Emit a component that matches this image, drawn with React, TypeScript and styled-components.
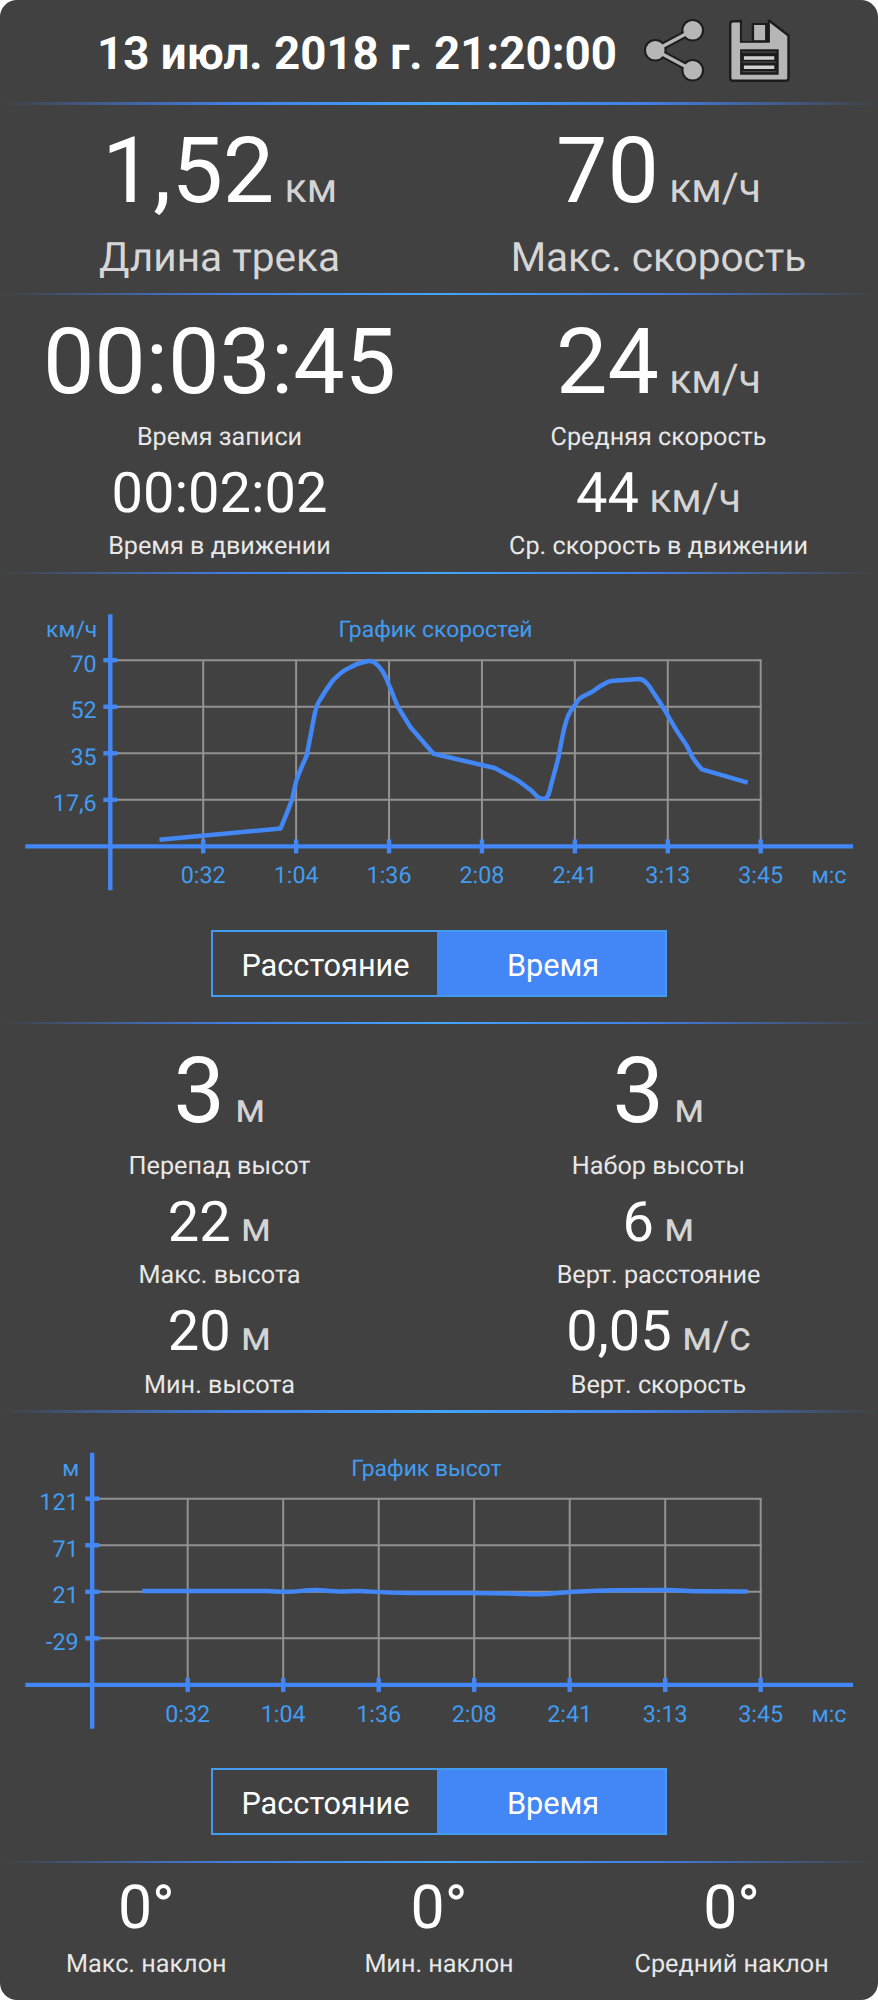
import React from "react";
import styled, { createGlobalStyle } from "styled-components";

const GlobalStyle = createGlobalStyle`
  body {
    margin: 0;
    background: #ffffff;
    font-family: Roboto, "Open Sans", sans-serif;
    text-rendering: geometricPrecision;
  }
`;

const BLUE = "#4287f5";
const SKY = "#429cf2";

const Screen = styled.main`
  box-sizing: border-box;
  width: 878px;
  height: 2000px;
  display: flex;
  flex-direction: column;
  background: #414141;
  border-radius: 17px;
  overflow: hidden;
  color: #ffffff;
`;

const Header = styled.header`
  box-sizing: border-box;
  height: 102px;
  flex: none;
  display: flex;
  align-items: center;
  padding: 0 0 0 97px;
`;

const Title = styled.h1`
  margin: 7px 17px 0 0;
  width: 523px;
  font-size: 45.7px;
  line-height: 54px;
  font-weight: 700;
  white-space: nowrap;
`;

const IconButton = styled.button`
  width: 82px;
  height: 82px;
  padding: 0;
  border: 0;
  background: none;
  display: block;
`;

const Divider = styled.hr<{ $thickness?: number }>`
  flex: none;
  width: 100%;
  height: ${(p) => p.$thickness ?? 2}px;
  margin: 0;
  border: 0;
  background: linear-gradient(
    90deg,
    rgba(66, 120, 220, 0) 0%,
    rgba(66, 122, 225, 0.5) 12%,
    #4280e8 27%,
    #42a5f8 50%,
    #4280e8 73%,
    rgba(66, 122, 225, 0.5) 88%,
    rgba(66, 120, 220, 0) 100%
  );
`;

const StatSection = styled.section<{ $height: number; $columns?: number; $top: number }>`
  box-sizing: border-box;
  flex: none;
  height: ${(p) => p.$height}px;
  padding-top: ${(p) => p.$top}px;
  display: grid;
  grid-template-columns: repeat(${(p) => p.$columns ?? 2}, 1fr);
`;

const Column = styled.div`
  display: flex;
  flex-direction: column;
  gap: 7px;
`;

type Size = "hero" | "large" | "medium" | "angle";

const metrics: Record<Size, { font: number; line: number; gap: number }> = {
  hero: { font: 91.6, line: 108, gap: 7 },
  large: { font: 91.6, line: 108, gap: 6 },
  medium: { font: 56, line: 66, gap: 6.4 },
  angle: { font: 60.8, line: 72, gap: 6 },
};

const StatBox = styled.div<{ $size: Size }>`
  display: flex;
  flex-direction: column;
  align-items: center;
  gap: ${(p) => metrics[p.$size].gap}px;
`;

const Value = styled.div<{ $size: Size }>`
  height: ${(p) => metrics[p.$size].line}px;
  font-size: ${(p) => metrics[p.$size].font}px;
  line-height: ${(p) => metrics[p.$size].line}px;
  white-space: pre;
`;

const Unit = styled.span`
  font-size: 41px;
  line-height: 1;
  color: #d4d4d4;
`;

const Caption = styled.div<{ $hero: boolean }>`
  font-size: ${(p) => (p.$hero ? 40.6 : 25.2)}px;
  line-height: ${(p) => (p.$hero ? 48 : 30)}px;
  color: ${(p) => (p.$hero ? "#d6d6d6" : "#e8e8e8")};
  white-space: nowrap;
`;

interface StatProps {
  size: Size;
  value: string;
  unit?: string;
  label: string;
}

function Stat({ size, value, unit, label }: StatProps) {
  return (
    <StatBox $size={size}>
      <Value $size={size}>
        {value}
        {unit && <Unit>{" " + unit}</Unit>}
      </Value>
      <Caption $hero={size === "hero"}>{label}</Caption>
    </StatBox>
  );
}

const ChartSection = styled.section`
  box-sizing: border-box;
  flex: none;
  height: 448px;
  padding-top: 30px;
  display: flex;
  flex-direction: column;
  align-items: center;
`;

const ChartSvg = styled.svg`
  display: block;
  width: 878px;
  height: 300px;
  flex: none;

  text {
    fill: ${SKY};
    font-size: 23.3px;
  }
`;

const ChartCaption = styled.text`
  && {
    font-size: 22.9px;
  }
`;

const Toggle = styled.div<{ $gap: number }>`
  box-sizing: border-box;
  width: 456px;
  height: 67px;
  flex: none;
  margin-top: ${(p) => p.$gap}px;
  display: flex;
  border: 2px solid ${SKY};
`;

const ToggleOption = styled.button<{ $active?: boolean }>`
  flex: ${(p) => (p.$active ? "1" : "none")};
  width: 224px;
  padding: ${(p) => (p.$active ? "4px 0 0 4px" : "4px 0 0 1px")};
  border: 0;
  background: ${(p) => (p.$active ? BLUE : "transparent")};
  color: #ffffff;
  font-family: inherit;
  font-size: 30.7px;
  line-height: 36px;
`;

const TIMES = ["0:32", "1:04", "1:36", "2:08", "2:41", "3:13", "3:45"];

interface ChartProps {
  title: string;
  unit: string;
  ticks: string[];
  axisX: number;
  gridTop: number;
  path: string;
}

function Chart({ title, unit, ticks, axisX, gridTop, path }: ChartProps) {
  const right = 760.7;
  const axisY = gridTop + 186.2;
  const xs = TIMES.map((_, i) => axisX + ((right - axisX) * (i + 1)) / TIMES.length);
  const ys = ticks.map((_, i) => gridTop + i * 46.55);
  return (
    <ChartSvg viewBox="0 0 878 300">
      <g stroke="#929292" strokeWidth="2">
        {ys.map((y) => (
          <line key={y} x1={axisX} x2={right + 1} y1={y} y2={y} />
        ))}
        {xs.map((x) => (
          <line key={x} x1={x} x2={x} y1={gridTop} y2={axisY} />
        ))}
      </g>
      <g stroke={BLUE} strokeWidth="4.4">
        <line x1={axisX} x2={axisX} y1={gridTop - 46} y2={gridTop + 230} />
        <line x1="25.3" x2="853" y1={axisY} y2={axisY} />
        {ys.map((y) => (
          <line key={y} x1={axisX - 7} x2={axisX + 7} y1={y} y2={y} />
        ))}
        {xs.map((x) => (
          <line key={x} x1={x} x2={x} y1={axisY - 7} y2={axisY + 7} />
        ))}
      </g>
      <path d={path} fill="none" stroke={BLUE} strokeWidth="4.5" strokeLinejoin="round" />
      <g textAnchor="end">
        <ChartCaption x={axisX - 13} y={gridTop - 22.8}>{unit}</ChartCaption>
        {ticks.map((t, i) => (
          <text key={t} x={axisX - 13.6} y={ys[i] + 11.6}>{t}</text>
        ))}
      </g>
      <g textAnchor="middle">
        <ChartCaption x={(axisX + right) / 2} y={gridTop - 22.8}>{title}</ChartCaption>
        {TIMES.map((t, i) => (
          <text key={t} x={xs[i]} y={gridTop + 223}>{t}</text>
        ))}
        <text x="829" y={gridTop + 223}>м:с</text>
      </g>
    </ChartSvg>
  );
}

const SPEED_PATH =
  "M159.5 235.7 L280.5 224.6 C285 214 289 204 292 195.5 C294 189 294.5 181 297.5 173.5 C301 164 304 157.5 306.7 151.5 L314.7 110 C316.2 103 317.5 99 320.5 95 C325 87.5 329 81.5 333.3 76 C339 70 344 66 350 63.5 C356 60 362 58.3 367 57.3 C370 56.9 371.5 57 373.5 57.8 C377 60 380.5 64 383 68 C386 73 387.5 77 389 81 L398 103 L410.7 123.5 L433.3 149.5 L440 151.2 L494.7 164 L518 176.5 L531.3 186.5 L537.5 192.8 C540 194.8 544.5 195.3 546.5 193.8 C548 192 549 190 549.5 187.5 C552 177 555 167 557.7 156.5 C561 142 563 124 568 112 C570 107.5 572 104.5 575 101 C577 98 578 95.5 581 93.5 L592.7 87.5 C596 85 598 83.5 601 81.8 C605 79.5 608 77.5 611 77 L625 76.1 L639 75 C642 75 644.5 76.5 647 79.5 C649.5 82 651 85 653 88 C659 97 662 101 667 110 C672 119 676 126 681 133 C684 137.5 686 140 688 144 C689.5 147 690.5 150 693 154 C696 158 698 161.5 702 165.3 L747.7 178.7";

const ALTITUDE_PATH =
  "M142.3 148 L267 148 C275 148.2 279 148.8 286 148.8 C297 148.8 305 147 315 147 C325 147 330 148.5 340 148.5 C350 148.5 356 147.7 364 148.2 C378 149 388 149.9 410 149.9 L474 150 C505 150 520 151.2 538 151.3 C552 151.2 558 149.6 570 149 C585 148.2 599 147.4 615 147.3 L668 147.1 C680 147.3 690 148.2 702 148.3 L747.7 148.5";

function ShareIcon() {
  const parts = (
    <>
      <path d="M55.7 20.3 L18.3 40.3 L55.7 60.3" fill="none" />
      <circle cx="55.7" cy="20.3" r="7.6" />
      <circle cx="18.3" cy="40.3" r="7.6" />
      <circle cx="55.7" cy="60.3" r="7.6" />
    </>
  );
  return (
    <svg width="82" height="82" viewBox="0 0 82 82" aria-label="Поделиться">
      <g fill="#1c1c1c" stroke="#1c1c1c" strokeWidth="7.4">{parts}</g>
      <g fill="#b6b6b6" stroke="#b6b6b6" strokeWidth="3.4">{parts}</g>
    </svg>
  );
}

function SaveIcon() {
  return (
    <svg width="82" height="82" viewBox="0 0 82 82" aria-label="Сохранить">
      <g transform="translate(1.5 0)">
        <path
          d="M13 11.3 H49.5 L68 25.5 V68 Q68 70.8 65.4 70.8 H12.4 Q9.7 70.8 9.7 68 V14 Q9.7 11.3 12.4 11.3 Z"
          fill="#b6b6b6"
          stroke="#1c1c1c"
          strokeWidth="2.4"
          strokeLinejoin="round"
        />
        <path d="M19.4 9.6 H49.4 V32.8 H19.4 Z" fill="#1c1c1c" />
        <path d="M21.4 9 H47.2 V13 H31.2 V31 H21.4 Z" fill="#414141" />
        <path d="M33.6 15 H44.6 V30.2 H33.6 Z" fill="#b6b6b6" />
        <path d="M19.6 39.3 H58.2 V64.8 H19.6 Z" fill="#1c1c1c" />
        <path d="M21.4 42.2 H56 M21.4 52.2 H56 M21.4 61.7 H56" stroke="#4a4a4a" strokeWidth="1.3" />
        <path d="M23.4 48 H53.8 M23.4 57.2 H53.8" stroke="#d0d0d0" strokeWidth="3.6" />
      </g>
    </svg>
  );
}

export default function App() {
  return (
    <>
      <GlobalStyle />
      <Screen>
        <Header>
          <Title>13 июл. 2018 г. 21:20:00</Title>
          <IconButton>
            <ShareIcon />
          </IconButton>
          <IconButton>
            <SaveIcon />
          </IconButton>
        </Header>
        <Divider $thickness={3} />

        <StatSection $height={188} $top={13}>
          <Stat size="hero" value="1,52" unit="км" label="Длина трека" />
          <Stat size="hero" value="70" unit="км/ч" label="Макс. скорость" />
        </StatSection>
        <Divider />

        <StatSection $height={277} $top={14}>
          <Column>
            <Stat size="large" value="00:03:45" label="Время записи" />
            <Stat size="medium" value="00:02:02" label="Время в движении" />
          </Column>
          <Column>
            <Stat size="large" value="24" unit="км/ч" label="Средняя скорость" />
            <Stat size="medium" value="44" unit="км/ч" label="Ср. скорость в движении" />
          </Column>
        </StatSection>
        <Divider />

        <ChartSection>
          <Chart
            title="График скоростей"
            unit="км/ч"
            ticks={["70", "52", "35", "17,6"]}
            axisX={110.3}
            gridTop={56.2}
            path={SPEED_PATH}
          />
          <Toggle $gap={26}>
            <ToggleOption>Расстояние</ToggleOption>
            <ToggleOption $active>Время</ToggleOption>
          </Toggle>
        </ChartSection>
        <Divider />

        <StatSection $height={386} $top={14}>
          <Column>
            <Stat size="large" value="3" unit="м" label="Перепад высот" />
            <Stat size="medium" value="22" unit="м" label="Макс. высота" />
            <Stat size="medium" value="20" unit="м" label="Мин. высота" />
          </Column>
          <Column>
            <Stat size="large" value="3" unit="м" label="Набор высоты" />
            <Stat size="medium" value="6" unit="м" label="Верт. расстояние" />
            <Stat size="medium" value="0,05" unit="м/с" label="Верт. скорость" />
          </Column>
        </StatSection>
        <Divider $thickness={3} />

        <ChartSection>
          <Chart
            title="График высот"
            unit="м"
            ticks={["121", "71", "21", "-29"]}
            axisX={92.2}
            gridTop={55.7}
            path={ALTITUDE_PATH}
          />
          <Toggle $gap={25}>
            <ToggleOption>Расстояние</ToggleOption>
            <ToggleOption $active>Время</ToggleOption>
          </Toggle>
        </ChartSection>
        <Divider />

        <StatSection $height={137} $top={9} $columns={3}>
          <Stat size="angle" value="0°" label="Макс. наклон" />
          <Stat size="angle" value="0°" label="Мин. наклон" />
          <Stat size="angle" value="0°" label="Средний наклон" />
        </StatSection>
      </Screen>
    </>
  );
}
